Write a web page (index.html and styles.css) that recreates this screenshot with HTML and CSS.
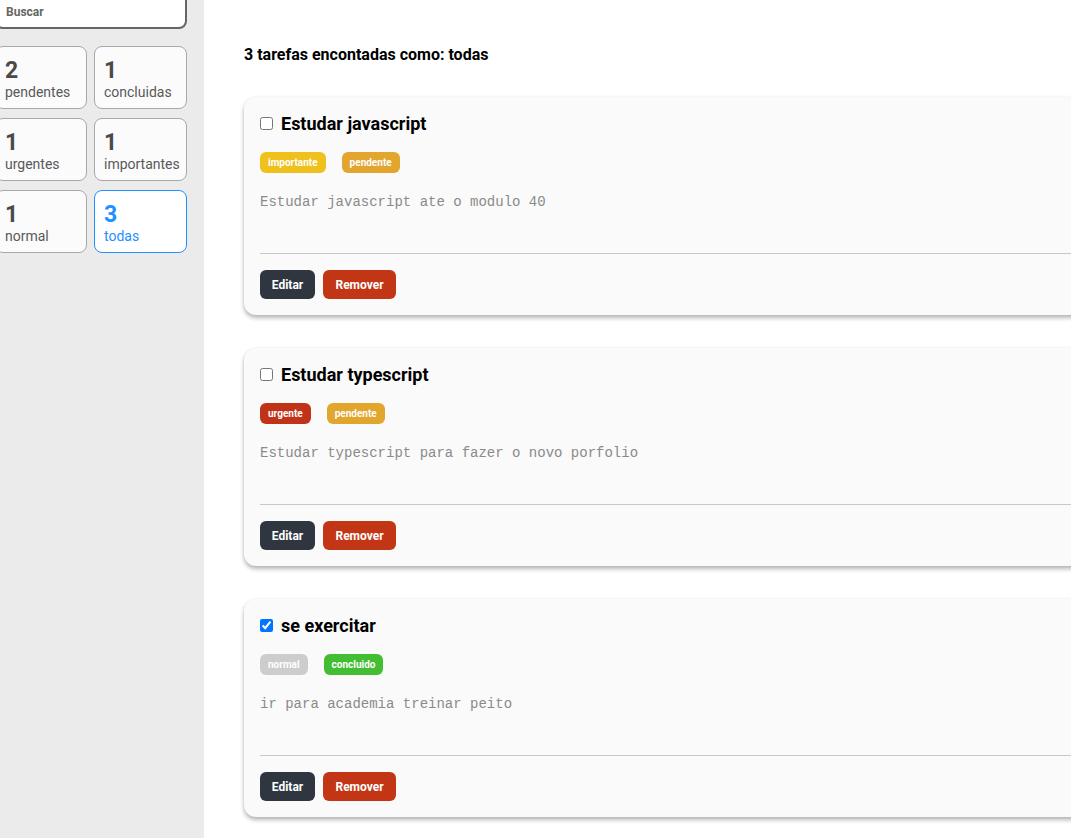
FILE: index.html
```html
<!DOCTYPE html>
<html lang="pt">
<head>
<meta charset="utf-8">
<title>Tarefas</title>
<link rel="stylesheet" href="styles.css">
</head>
<body>
<div class="app">
  <aside class="sidebar">
    <div class="sidebar-inner">
      <div class="search"><span>Buscar</span></div>
      <div class="filters">
        <div class="filter"><div class="num">2</div><div class="lbl">pendentes</div></div>
        <div class="filter"><div class="num">1</div><div class="lbl">concluidas</div></div>
        <div class="filter"><div class="num">1</div><div class="lbl">urgentes</div></div>
        <div class="filter"><div class="num">1</div><div class="lbl">importantes</div></div>
        <div class="filter"><div class="num">1</div><div class="lbl">normal</div></div>
        <div class="filter active"><div class="num">3</div><div class="lbl">todas</div></div>
      </div>
    </div>
  </aside>
  <main class="main">
    <h2 class="result">3 tarefas encontadas como: todas</h2>
    <ul class="tasks">
      <li class="card">
        <label class="title"><input type="checkbox"> <span>Estudar javascript</span></label>
        <div class="tags"><span class="tag importante">importante</span><span class="tag pendente">pendente</span></div>
        <p class="desc">Estudar javascript ate o modulo 40</p>
        <hr class="sep">
        <div class="actions"><button class="btn edit">Editar</button><button class="btn remove">Remover</button></div>
      </li>
      <li class="card">
        <label class="title"><input type="checkbox"> <span>Estudar typescript</span></label>
        <div class="tags"><span class="tag urgente">urgente</span><span class="tag pendente">pendente</span></div>
        <p class="desc">Estudar typescript para fazer o novo porfolio</p>
        <hr class="sep">
        <div class="actions"><button class="btn edit">Editar</button><button class="btn remove">Remover</button></div>
      </li>
      <li class="card">
        <label class="title"><input type="checkbox" checked> <span>se exercitar</span></label>
        <div class="tags"><span class="tag normal">normal</span><span class="tag concluido">concluido</span></div>
        <p class="desc">ir para academia treinar peito</p>
        <hr class="sep">
        <div class="actions"><button class="btn edit">Editar</button><button class="btn remove">Remover</button></div>
      </li>
    </ul>
  </main>
</div>
</body>
</html>
```

FILE: styles.css
```css
* { box-sizing: border-box; }
html, body { margin: 0; padding: 0; }
body {
  font-family: Roboto, "Liberation Sans", Arial, sans-serif;
  background: #fff;
  overflow: hidden;
  height: 838px;
}
.app {
  display: flex;
  width: 1110px;
  min-height: 838px;
}
.sidebar {
  width: 204px;
  flex: none;
  background: #ebebeb;
  min-height: 838px;
}
.sidebar-inner {
  width: 192px;
  margin-left: -5px;
  margin-top: -15px;
}
.search {
  height: 44px;
  border: 2px solid #666;
  border-radius: 8px;
  background: #fff;
  display: flex;
  align-items: flex-end;
  padding: 0 10px 8px 9px;
  font-size: 12px;
  font-weight: 700;
  color: #666;
  line-height: 14px;
}
.filters {
  margin-top: 17px;
  display: grid;
  grid-template-columns: 92px 93px;
  column-gap: 7px;
  row-gap: 9px;
}
.filter {
  height: 63px;
  border: 1px solid #a8a8a8;
  border-radius: 8px;
  background: #fbfbfb;
  padding: 11px 8px 0 9px;
  color: #555;
}
.filter .num {
  font-size: 23px;
  font-weight: 700;
  line-height: 25px;
  color: #4a4a4a;
}
.filter .lbl {
  font-size: 14px;
  line-height: 18px;
  color: #595959;
}
.filter.active {
  border-color: #1e90ff;
  background: #fff;
}
.filter.active .num,
.filter.active .lbl { color: #1e90ff; }

.main {
  flex: 1;
  padding-left: 40px;
}
.result {
  margin: 46px 0 0 0;
  font-size: 16px;
  line-height: 18px;
  font-weight: 700;
  color: #000;
}
.tasks {
  list-style: none;
  margin: 33px 0 0 0;
  padding: 0;
  display: flex;
  flex-direction: column;
  gap: 33px;
}
.card {
  background: #fafafa;
  border-radius: 12px;
  box-shadow: 0 3px 4px rgba(0,0,0,0.28), 0 0 3px rgba(0,0,0,0.06);
  padding: 15px 16px 16px 16px;
  height: 218px;
}
.title {
  display: flex;
  align-items: center;
  gap: 8px;
  height: 22px;
  font-size: 18px;
  font-weight: 700;
  color: #000;
}
.title input {
  margin: 0;
  width: 13px;
  height: 13px;
}
.tags {
  margin-top: 18px;
  display: flex;
  gap: 16px;
}
.tag {
  height: 21px;
  line-height: 21px;
  padding: 0 8px;
  border-radius: 6px;
  font-size: 10px;
  font-weight: 700;
  color: #fff;
}
.tag.importante { background: #efc11c; }
.tag.pendente { background: #e2a52e; }
.tag.urgente { background: #c13318; }
.tag.normal { background: #cdcdcd; }
.tag.concluido { background: #43bd32; }
.desc {
  margin: 19px 0 0 0;
  height: 20px;
  line-height: 20px;
  font-family: "Liberation Mono", "DejaVu Sans Mono", monospace;
  font-size: 14px;
  color: #8a8a8a;
}
.sep {
  margin: 41px 0 0 0;
  border: 0;
  border-top: 1px solid #c8c8c8;
  height: 0;
}
.actions {
  margin-top: 16px;
  display: flex;
  gap: 8px;
}
.btn {
  height: 29px;
  border: 0;
  border-radius: 6px;
  padding: 0;
  font-family: Roboto, "Liberation Sans", Arial, sans-serif;
  font-size: 12px;
  font-weight: 700;
  color: #fff;
}
.btn.edit { background: #2f3640; width: 55px; }
.btn.remove { background: #c23616; width: 73px; }
```
